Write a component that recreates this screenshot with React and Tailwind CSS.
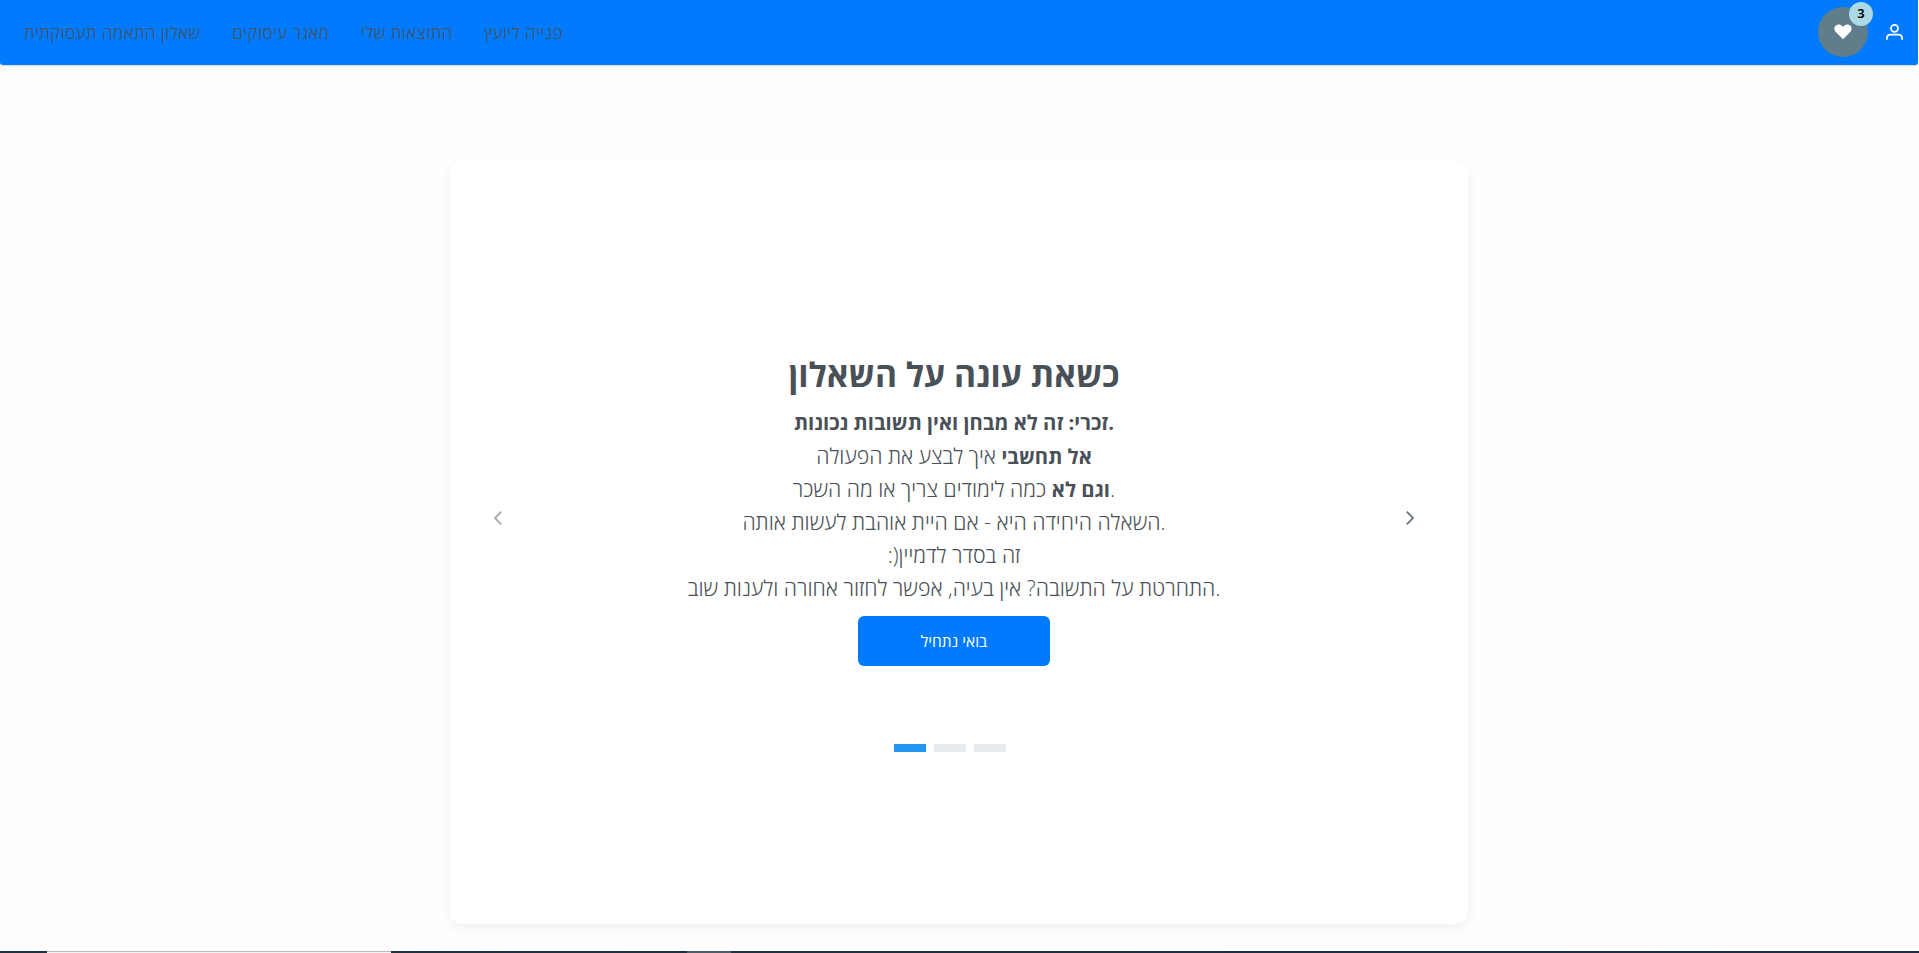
const links = ['שאלון התאמה תעסוקתית', 'מאגר עיסוקים', 'התוצאות שלי', 'פנייה ליועץ'];

function Header() {
  return (
    <header className="flex h-[65px] w-[1918px] items-center justify-between rounded-b-[3px] bg-[#007bff] pr-[15px] pb-px pl-6 shadow-[0_1px_1px_rgba(0,0,0,0.16)]">
      <nav className="flex gap-[31.5px] pt-[2px] text-[17px] leading-6 font-light tracking-[0.5px] text-[#495057]">
        {links.map((l) => (
          <a key={l} href="#" className="whitespace-nowrap">{l}</a>
        ))}
      </nav>
      <div className="flex items-center gap-[18px]">
        <div className="relative flex size-[50px] items-center justify-center rounded-full bg-[#607d8b]">
          <svg className="size-[18px]" viewBox="0 0 18 18" fill="#fff">
            <path d="M9 16.2 1.8 9.1C-.1 7-.1 4 1.9 2.4 4 .8 6.600 1.200 8.200 3l.8.9.8-.9c1.600-1.800 4.200-2.200 6.300-.6 2 1.600 2 4.600.1 6.700z" />
          </svg>
          <span className="absolute -top-[5px] -right-[5px] flex size-6 items-center justify-center rounded-full bg-[#add8e6] font-['Noto_Sans',sans-serif] text-[13px] font-semibold text-black">3</span>
        </div>
        <svg className="h-4 w-[17px]" viewBox="0 0 17 16" fill="none" stroke="#fff" strokeWidth="1.7" strokeLinecap="round">
          <circle cx="8.5" cy="4.300" r="3.500" />
          <path d="M.9 15.100v-.7c0-2.200 1.600-3.700 3.800-3.700h7.600c2.200 0 3.800 1.500 3.800 3.700v.7" />
        </svg>
      </div>
    </header>
  );
}

function Arrow({ d, className }) {
  return (
    <button className={className}>
      <svg className="h-[14px] w-2" viewBox="0 0 8 14" fill="none" stroke="#6c757d" strokeWidth="1.800">
        <path d={d} />
      </svg>
    </button>
  );
}

function Line({ lead, children }) {
  return (
    <p className="h-[33px]">
      {lead && <b className="text-[20.25px] leading-none font-bold">{lead}</b>}
      {children}
    </p>
  );
}

export default function App() {
  return (
    <div className="flex h-[953px] flex-col overflow-hidden bg-[#fefefe] font-['Open_Sans','Noto_Sans',sans-serif]">
      <Header />
      <main className="flex flex-1 justify-center pt-24 pr-px">
        <section className="flex h-[763px] w-[1018px] items-center justify-between rounded-xl bg-white px-11 shadow-[0_4px_12px_rgba(0,0,0,0.06)]">
          <Arrow d="M7.200.7 1 7l6.200 6.300" className="mt-[-50px] opacity-60" />
          <div className="flex h-full flex-col items-center pt-[187px] text-[#495057]">
            <h1 className="text-[33.6px] leading-[53px] font-bold">כשאת עונה על השאלון</h1>
            <div className="mt-[5px] text-center text-[21.3px] leading-[33px] font-light whitespace-nowrap">
              <p className="h-[33px] text-[20.25px] font-bold">זכרי: זה לא מבחן ואין תשובות נכונות.</p>
              <Line lead="אל תחשבי"> איך לבצע את הפעולה</Line>
              <Line lead="וגם לא"> כמה לימודים צריך או מה השכר.</Line>
              <Line>השאלה היחידה היא - אם היית אוהבת לעשות אותה.</Line>
              <Line>:)זה בסדר לדמיין</Line>
              <Line>התחרטת על התשובה? אין בעיה, אפשר לחזור אחורה ולענות שוב.</Line>
            </div>
            <button className="mt-3 h-[50px] w-48 shrink-0 rounded-md bg-[#007bff] pt-px text-[15.5px] text-white">בואי נתחיל</button>
            <div className="mt-[78px] mr-2 flex gap-2">
              <span className="h-2 w-8 bg-[#2196f3]" />
              <span className="h-2 w-8 bg-[#e9ecef]" />
              <span className="h-2 w-8 bg-[#e9ecef]" />
            </div>
          </div>
          <Arrow d="M.8.7 7 7 .8 13.300" className="mt-[-50px] mr-[10px]" />
        </section>
      </main>
      <footer className="flex h-[2px] bg-[linear-gradient(to_right,#20323e,#1e2b43)]">
        <span className="ml-[47px] h-full w-[344px] border-t border-[#bdbdbd] bg-[#f3f3f3]" />
        <span className="ml-[296px] h-full w-11 bg-[#4e5c65]" />
      </footer>
    </div>
  );
}
